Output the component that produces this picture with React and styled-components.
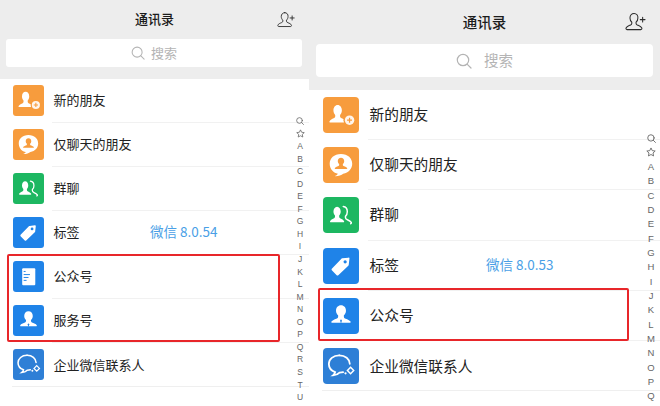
import React from 'react';
import styled, { createGlobalStyle } from 'styled-components';

const GlobalStyle = createGlobalStyle`
  html, body {
    margin: 0;
    padding: 0;
    background: #fff;
  }
  #root {
    height: 406px;
    overflow: hidden;
  }
`;

const small = {
  width: 309,
  titleRow: 39,
  titleSize: 13,
  addRight: 14,
  addSize: 18,
  searchLeft: 6,
  searchRight: 7,
  searchHeight: 28,
  searchRadius: 3,
  searchGap: 6,
  searchIcon: 14,
  searchSize: 13,
  headerBottom: 12,
  rowHeight: 44,
  iconLeft: 13,
  iconTop: 6,
  iconSize: 31,
  iconRadius: 3,
  bodyGap: 8,
  bodyPad: 1.5,
  labelSize: 13,
  labelWidth: 96.5,
  noteSize: 13.5,
  boxLeft: 7,
  boxWidth: 273,
  boxTop: -1,
  boxBottom: 1,
  indexRight: 2,
  indexTop: 115,
  indexPitch: 12.55,
  indexSize: 8.5,
  indexGlyph: 8,
};

const large = {
  width: 351,
  titleRow: 44,
  titleSize: 14.5,
  addRight: 14,
  addSize: 21,
  searchLeft: 7,
  searchRight: 7,
  searchHeight: 33,
  searchRadius: 4,
  searchGap: 12,
  searchIcon: 16,
  searchSize: 14.5,
  headerBottom: 13,
  rowHeight: 50.2,
  iconLeft: 14,
  iconTop: 7,
  iconSize: 36,
  iconRadius: 4,
  bodyGap: 9,
  bodyPad: 1.5,
  labelSize: 14.7,
  labelWidth: 116.5,
  noteSize: 13.5,
  boxLeft: 9,
  boxWidth: 311,
  boxTop: -3,
  boxBottom: 0,
  indexRight: 2,
  indexTop: 131,
  indexPitch: 14.33,
  indexSize: 9.5,
  indexGlyph: 9,
};

const Page = styled.div`
  display: flex;
  width: 660px;
  height: 406px;
  overflow: hidden;
  font-family: "Noto Sans CJK SC", "Liberation Sans", sans-serif;
`;

const Panel = styled.section`
  position: relative;
  flex: 0 0 ${p => p.$m.width}px;
  height: 406px;
  overflow: hidden;
  background: #fff;
`;

const Header = styled.header`
  background: #ededed;
  padding-bottom: ${p => p.$m.headerBottom}px;
`;

const TitleBar = styled.div`
  position: relative;
  display: flex;
  align-items: center;
  justify-content: center;
  height: ${p => p.$m.titleRow}px;
`;

const Title = styled.h1`
  margin: -2px 0 0;
  font-size: ${p => p.$m.titleSize}px;
  font-weight: 500;
  color: #1c1c1c;
`;

const AddButton = styled.span`
  position: absolute;
  right: ${p => p.$m.addRight}px;
  top: 50%;
  display: flex;
  transform: translateY(-50%);
`;

const SearchBox = styled.div`
  display: flex;
  align-items: center;
  justify-content: center;
  gap: ${p => p.$m.searchGap}px;
  height: ${p => p.$m.searchHeight}px;
  margin: 0 ${p => p.$m.searchRight}px 0 ${p => p.$m.searchLeft}px;
  border-radius: ${p => p.$m.searchRadius}px;
  background: #fff;
  font-size: ${p => p.$m.searchSize}px;
  color: #b4b4b4;
`;

const SearchHint = styled.span`
  margin-top: -2px;
`;

const List = styled.div`
  display: flex;
  flex-direction: column;
`;

const Row = styled.div`
  display: flex;
  align-items: flex-start;
  box-sizing: border-box;
  height: ${p => p.$m.rowHeight}px;
  margin-left: ${p => (p.$last ? p.$m.iconLeft - 1 : 0)}px;
  padding-top: ${p => p.$m.iconTop}px;
  padding-left: ${p => (p.$last ? 1 : p.$m.iconLeft)}px;
  border-bottom: ${p => (p.$last ? '1px solid #efefef' : 'none')};
`;

const IconTile = styled.span`
  flex: 0 0 ${p => p.$m.iconSize}px;
  display: flex;
  height: ${p => p.$m.iconSize}px;
  border-radius: ${p => p.$m.iconRadius}px;
  overflow: hidden;
  background: ${p => p.$color};
`;

const RowBody = styled.div`
  flex: 1;
  display: flex;
  align-items: center;
  align-self: stretch;
  box-sizing: border-box;
  height: ${p => p.$m.rowHeight}px;
  margin-top: -${p => p.$m.iconTop}px;
  margin-left: ${p => p.$m.bodyGap}px;
  padding-left: ${p => p.$m.bodyPad}px;
  border-bottom: ${p => (p.$last ? 'none' : '1px solid #f1f1f1')};
`;

const Label = styled.span`
  flex: ${p => (p.$fixed ? `0 0 ${p.$m.labelWidth}px` : '0 1 auto')};
  margin-top: -2px;
  font-size: ${p => p.$m.labelSize}px;
  color: #222;
  white-space: nowrap;
`;

const VersionNote = styled.span`
  font-size: ${p => p.$m.noteSize}px;
  color: #4a9fe6;
  white-space: nowrap;
  margin-top: -3px;
`;

const Highlighted = styled.div`
  position: relative;

  &::after {
    content: "";
    position: absolute;
    left: ${p => p.$m.boxLeft}px;
    width: ${p => p.$m.boxWidth}px;
    top: ${p => p.$m.boxTop}px;
    bottom: ${p => p.$m.boxBottom}px;
    box-sizing: border-box;
    border: 2px solid #e8262a;
    border-radius: 2px;
  }
`;

const AlphaIndex = styled.aside`
  position: absolute;
  right: ${p => p.$m.indexRight}px;
  top: ${p => p.$m.indexTop}px;
  display: flex;
  flex-direction: column;
  width: 14px;
`;

const AlphaItem = styled.span`
  display: flex;
  align-items: center;
  justify-content: center;
  height: ${p => p.$m.indexPitch}px;
  font-family: "Liberation Sans", sans-serif;
  font-size: ${p => p.$m.indexSize}px;
  line-height: 1;
  color: #666;
`;

const person = 'M16 7c-3.1 0-5.2 2.5-5.2 5.6 0 2 .9 3.7 2.2 4.8v1.4c0 1-.8 1.6-2 2.1-1.9.8-3.9 1.4-5 3-.4.6 0 1.3.8 1.3h18.4c.8 0 1.2-.7.8-1.3-1.1-1.6-3.1-2.2-5-3-1.2-.5-2-1.1-2-2.1v-1.4c1.3-1.1 2.2-2.8 2.2-4.8C21.2 9.5 19.1 7 16 7z';

const Glyph = ({ children }) => (
  <svg viewBox="0 0 32 32" width="100%" height="100%">{children}</svg>
);

const NewFriendIcon = () => (
  <Glyph>
    <path d={person} fill="#fff" transform="translate(1.5 1) scale(.72 .86)" />
    <circle cx="23.6" cy="20.6" r="5.4" fill="#f79c3d" />
    <circle cx="23.6" cy="20.6" r="4.2" fill="#fff" opacity=".9" />
    <path d="M23.6 18.4v4.4M21.4 20.6h4.4" stroke="#f79c3d" strokeWidth="1.1" />
  </Glyph>
);

const ChatOnlyIcon = () => (
  <Glyph>
    <path d="M16 5.5C9.2 5.5 5 9.7 5 15s4 9.3 8 9.6c-.6 1-1.8 1.9-3.2 2.4 3.4.2 6.6-.9 8.4-2.4 5.3-.8 8.8-4.7 8.8-9.6 0-5.3-4.2-9.5-11-9.5z" fill="#fff" transform="translate(1.4 1.3) scale(.91)" />
    <path d={person} fill="#f79c3d" transform="translate(7.2 5.6) scale(.55)" />
  </Glyph>
);

const GroupIcon = () => (
  <Glyph>
    <path d="M18 8.5c2.4.3 3.6 2.3 3.6 4.6 0 1.6-.6 3-1.6 4v1.3c0 1 .8 1.4 1.7 1.8 1.4.6 2.7 1.2 3.4 2.4.3.5 0 1-.5 1.1" fill="none" stroke="#fff" strokeWidth="1.3" strokeLinecap="round" />
    <path d={person} fill="#fff" transform="translate(2.6 3.3) scale(.62 .76)" />
  </Glyph>
);

const TagIcon = () => (
  <Glyph>
    <g transform="translate(3.2 3.2) scale(.8)">
      <path d="M17.5 7.5l6.8-.8c.7-.1 1.2.4 1.1 1.1l-.8 6.8c0 .4-.2.7-.5 1L13 26.2c-.5.5-1.3.5-1.8 0L5.8 20.8c-.5-.5-.5-1.3 0-1.8L16.5 8c.3-.3.6-.5 1-.5z" fill="#fff" />
      <circle cx="20.6" cy="11.4" r="1.8" fill="#1f83e8" />
    </g>
  </Glyph>
);

const DocIcon = () => (
  <Glyph>
    <rect x="9.5" y="7.5" width="13.5" height="17.5" rx="1" fill="#fff" />
    <path d="M11 10.8h2M11 14h6.5M11 17h5M11 20h3" stroke="#1f83e8" strokeWidth="1" />
  </Glyph>
);

const ServiceIcon = () => (
  <Glyph>
    <g transform="translate(2.4 .6) scale(.85)">
      <path d={person} fill="#fff" />
      <path d="M16 21.5l-1 1.4 1 3 1-3z" fill="#1f83e8" />
    </g>
  </Glyph>
);

const EnterpriseIcon = () => (
  <Glyph>
    <path d="M14.5 6.5C9 6.5 5.2 10 5.2 14.3c0 3.5 2.4 6.1 5.6 7.2-.2 1.1-.9 2-1.9 2.8 2.3-.1 4.5-1 5.8-2.4 1.1 0 2.2-.1 3.2-.4" fill="none" stroke="#fff" strokeWidth="1.6" strokeLinecap="round" />
    <path d="M14.5 6.5c5.3 0 9.1 3.3 9.3 7.5" fill="none" stroke="#fff" strokeWidth="1.6" strokeLinecap="round" />
    <path d="M24.5 17.2l2.8 2.8-2.8 2.8-2.8-2.8z" fill="none" stroke="#fff" strokeWidth="1.3" />
    <circle cx="20" cy="22.5" r="1" fill="#fff" />
  </Glyph>
);

const AddFriendIcon = ({ size }) => (
  <svg viewBox="0 0 22 20" width={size} height={size * 20 / 22} fill="none" stroke="#2b2b2b" strokeWidth="1.1" strokeLinejoin="round" strokeLinecap="round">
    <path d="M9.5 1C6.9 1 5.2 3.1 5.2 5.7c0 1.9.8 3.4 1.9 4.4v1.4c0 .9-.7 1.400-1.700 1.800-1.700.7-3.600 1.300-4.300 3-.3.8.1 1.700 1 1.700h14.500c.9 0 1.300-.9 1-1.700-.7-1.700-2.600-2.300-4.300-3-1-.4-1.700-.9-1.700-1.800v-1.400c1.100-1 1.900-2.500 1.900-4.400C13.800 3.100 12.100 1 9.500 1z" />
    <path d="M16 7.500h5M18.500 5v5" />
  </svg>
);

const SearchIcon = ({ size, color = '#b4b4b4', width = 1.2 }) => (
  <svg viewBox="0 0 16 16" width={size} height={size} fill="none" stroke={color} strokeWidth={width} strokeLinecap="round">
    <circle cx="7" cy="7" r="5.7" />
    <path d="M11.3 11.3l3.7 3.7" />
  </svg>
);

const StarIcon = ({ size }) => (
  <svg viewBox="0 0 16 16" width={size} height={size} fill="none" stroke="#666" strokeWidth="1.4" strokeLinejoin="round">
    <path d="M8 1.5l2 4.3 4.7.6-3.5 3.200.9 4.700L8 12l-4.100 2.300.9-4.700-3.500-3.200L6 5.800z" />
  </svg>
);

const rowColors = {
  orange: '#f79c3d',
  green: '#1db761',
  blue: '#1f83e8',
  steel: '#2e7fd6',
};

const contactRow = (m, { label, color, Icon, note, last }) => (
  <Row key={label} $m={m} $last={last}>
    <IconTile $m={m} $color={rowColors[color]}><Icon /></IconTile>
    <RowBody $m={m} $last={last}>
      <Label $m={m} $fixed={!!note}>{label}</Label>
      {note && <VersionNote $m={m}>{note}</VersionNote>}
    </RowBody>
  </Row>
);

const Phone = ({ m, version, highlighted, letters }) => (
  <Panel $m={m}>
    <Header $m={m}>
      <TitleBar $m={m}>
        <Title $m={m}>通讯录</Title>
        <AddButton $m={m}><AddFriendIcon size={m.addSize} /></AddButton>
      </TitleBar>
      <SearchBox $m={m}>
        <SearchIcon size={m.searchIcon} />
        <SearchHint>搜索</SearchHint>
      </SearchBox>
    </Header>
    <List>
      {contactRow(m, { label: '新的朋友', color: 'orange', Icon: NewFriendIcon })}
      {contactRow(m, { label: '仅聊天的朋友', color: 'orange', Icon: ChatOnlyIcon })}
      {contactRow(m, { label: '群聊', color: 'green', Icon: GroupIcon })}
      {contactRow(m, { label: '标签', color: 'blue', Icon: TagIcon, note: version })}
      <Highlighted $m={m}>{highlighted.map(row => contactRow(m, row))}</Highlighted>
      {contactRow(m, { label: '企业微信联系人', color: 'steel', Icon: EnterpriseIcon, last: true })}
    </List>
    <AlphaIndex $m={m}>
      <AlphaItem $m={m}><SearchIcon size={m.indexGlyph} color="#666" width={1.6} /></AlphaItem>
      <AlphaItem $m={m}><StarIcon size={m.indexGlyph + 1} /></AlphaItem>
      {letters.split('').map(letter => (
        <AlphaItem key={letter} $m={m}>{letter}</AlphaItem>
      ))}
    </AlphaIndex>
  </Panel>
);

export default function App() {
  return (
    <Page>
      <GlobalStyle />
      <Phone
        m={small}
        version="微信 8.0.54"
        letters="ABCDEFGHIJKLMNOPQRSTU"
        highlighted={[
          { label: '公众号', color: 'blue', Icon: DocIcon },
          { label: '服务号', color: 'blue', Icon: ServiceIcon },
        ]}
      />
      <Phone
        m={large}
        version="微信 8.0.53"
        letters="ABCDEFGHIJKLMNOPQ"
        highlighted={[
          { label: '公众号', color: 'blue', Icon: ServiceIcon },
        ]}
      />
    </Page>
  );
}
